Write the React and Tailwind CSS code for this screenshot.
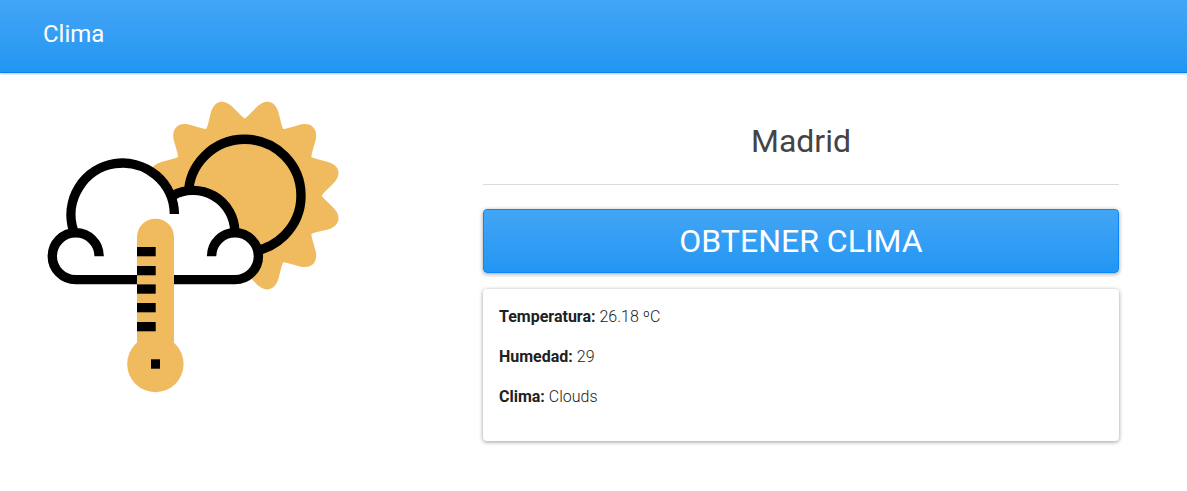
const PETAL_ANGLES = [15, 45, 75, 195, 225, 255, 285, 315, 345];
const TICKS = [247, 266, 284.4, 303, 322];

function WeatherIcon() {
  return (
    <svg viewBox="40 94 306 306" className="w-[306px] shrink-0" role="img" aria-hidden="true">
      <g fill="#f0bb5e" transform="translate(244.7 195.6)">
        <circle r="76" />
        {PETAL_ANGLES.map((angle) => (
          <path
            key={angle}
            transform={`rotate(${angle})`}
            d="M0 0L73.8 -20.6Q75 -19 78.5 -17L86 -12.8C93 -9.4 96.8 -5 96.8 0C96.8 5 93 9.4 86 12.8L78.5 17Q75 19 73.8 20.6Z"
          />
        ))}
      </g>
      <circle cx="244.7" cy="195.6" r="56.3" fill="none" stroke="#000" strokeWidth="9.4" />
      <g fill="#fff">
        <circle cx="122.7" cy="214.4" r="52" />
        <circle cx="193" cy="232.4" r="42" />
        <circle cx="75.7" cy="256.2" r="24" />
        <circle cx="235" cy="256.2" r="24" />
        <rect x="75" y="220" width="160" height="60" />
      </g>
      <g fill="none" stroke="#000" strokeWidth="9.4">
        <path d="M73.3 230A51.7 51.7 0 1 1 174.4 214" />
        <path d="M173 195.5A41.8 41.8 0 0 1 234.8 231" />
        <path d="M99.1 256.2A23.4 23.4 0 1 0 75.7 279.6H235A23.4 23.4 0 1 0 211.6 256.2" />
      </g>
      <g fill="#f0bb5e">
        <path d="M137 237.2A18.5 18.5 0 0 1 174 237.2V350H137Z" />
        <circle cx="155.4" cy="364" r="28.2" />
      </g>
      {TICKS.map((y) => (
        <rect key={y} x="137" y={y} width="18.7" height="9.3" />
      ))}
      <rect x="151" y="359.3" width="9" height="9.4" />
    </svg>
  );
}

function Reading({ label, value }) {
  return (
    <p className="mb-4 leading-6">
      <strong className="font-bold">{label}:</strong> {value}
    </p>
  );
}

export default function App() {
  return (
    <div className="bg-white font-['Roboto','Liberation_Sans',sans-serif] text-base font-light text-[#212121]">
      <header className="flex h-[73px] items-center border-b border-[#0a80fa] bg-linear-to-b from-[#42a5f5] to-[#2196f3] px-[43px] pb-[5px] shadow-[0_1px_2px_rgba(0,0,0,0.25)]">
        <h1 className="text-2xl leading-9 font-normal text-white">Clima</h1>
      </header>
      <main className="flex items-start gap-[137px] pt-[21px] pr-[68px] pb-12 pl-10">
        <WeatherIcon />
        <section className="flex-1 pt-[23px]">
          <h2 className="text-center text-[32px] leading-12 font-normal text-[#444]">Madrid</h2>
          <hr className="mt-[19px] mb-6 border-[#dcdcdc]" />
          <button
            type="button"
            className="block h-16 w-full rounded-[4px] border border-[#0a85fa] bg-linear-to-b from-[#42a5f5] to-[#2196f3] text-[32px] leading-12 font-normal text-white shadow-[0_1px_4px_rgba(0,0,0,0.4)]"
          >
            OBTENER CLIMA
          </button>
          <div className="mt-4 rounded-[4px] p-4 shadow-[0_1px_4px_rgba(0,0,0,0.4)]">
            <Reading label="Temperatura" value="26.18 ºC" />
            <Reading label="Humedad" value="29" />
            <Reading label="Clima" value="Clouds" />
          </div>
        </section>
      </main>
    </div>
  );
}
